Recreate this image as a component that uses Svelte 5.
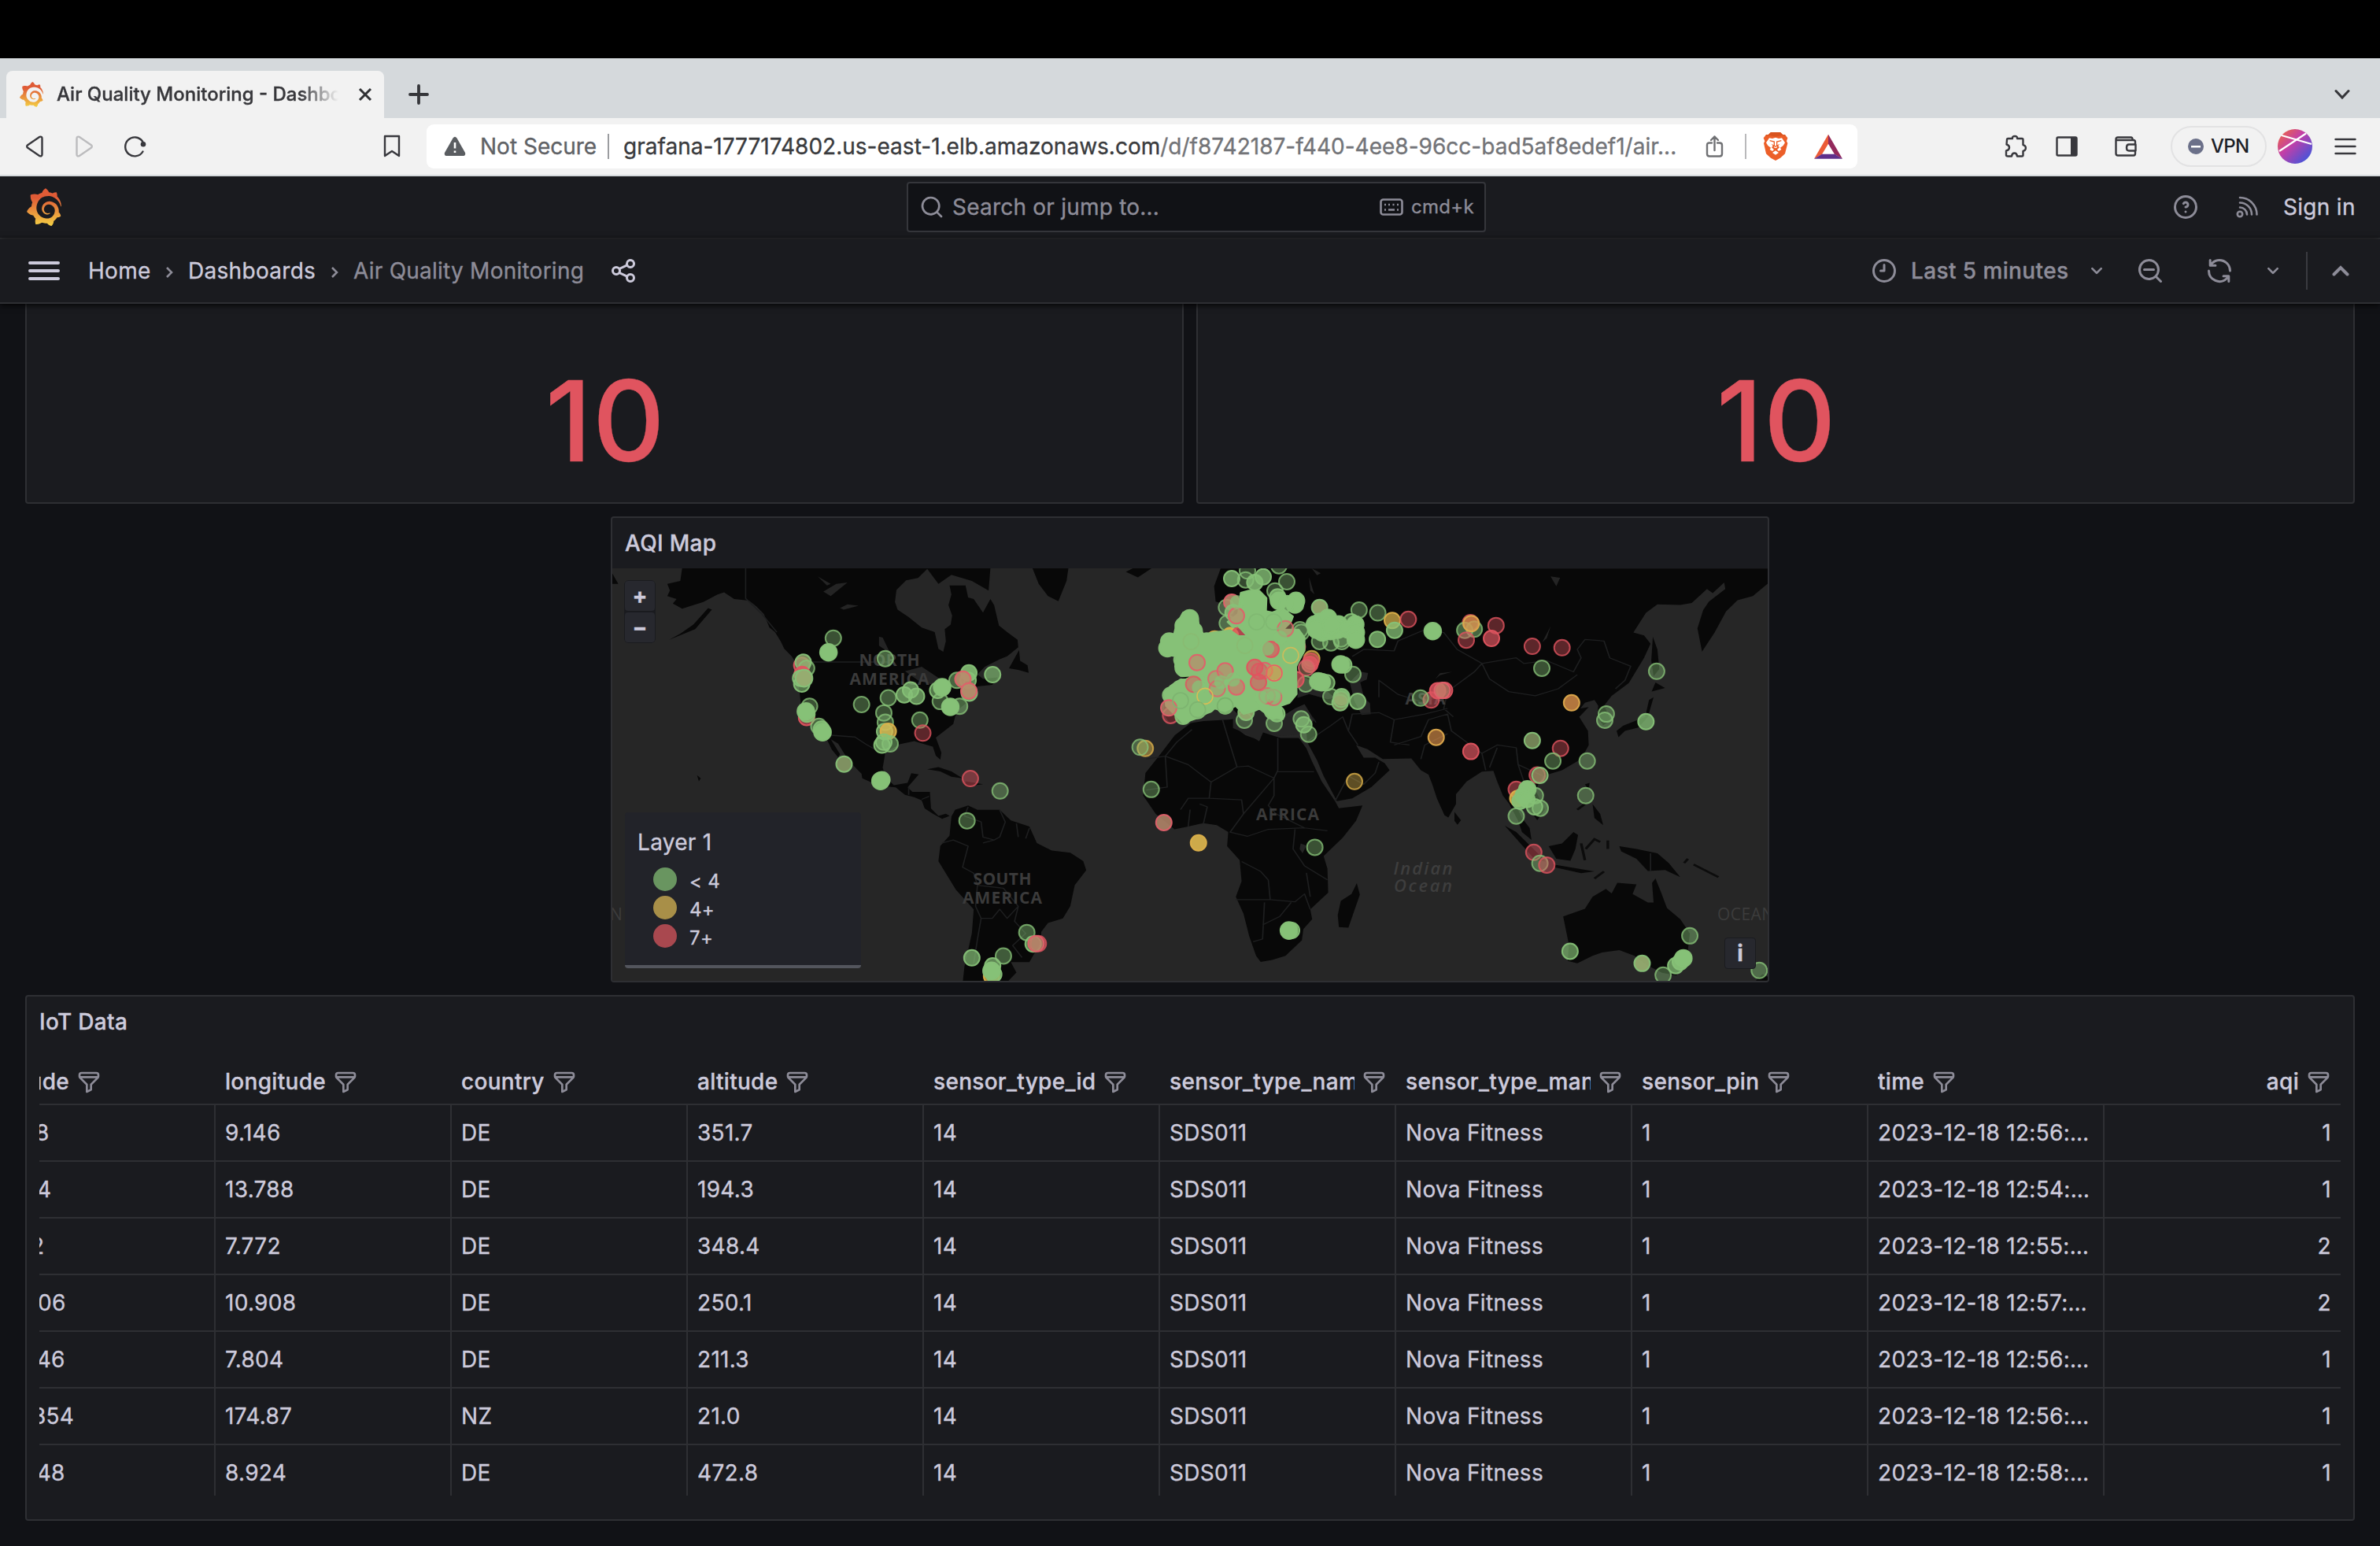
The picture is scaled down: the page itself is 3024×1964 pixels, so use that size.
<script>
  const icons = {
    filter: 'M19,2H5A3,3,0,0,0,2,5V6.17a3,3,0,0,0,.25,1.2l0,.06a2.81,2.81,0,0,0,.59.86L9,14.41V21a1,1,0,0,0,.47.85A1,1,0,0,0,10,22a1,1,0,0,0,.45-.11l4-2A1,1,0,0,0,15,19V14.41l6.12-6.12a2.81,2.81,0,0,0,.59-.86l0-.06A3,3,0,0,0,22,6.17V5A3,3,0,0,0,19,2ZM13.29,13.29A1,1,0,0,0,13,14v4.38l-2,1V14a1,1,0,0,0-.29-.71L5.41,8H18.59ZM20,6H4V5A1,1,0,0,1,5,4H19a1,1,0,0,1,1,1Z',
    share: 'M18,14a4,4,0,0,0-3.08,1.48l-5.1-2.35a3.64,3.64,0,0,0,0-2.26l5.1-2.35A4,4,0,1,0,14,6a4.17,4.17,0,0,0,.07.71L8.79,9.14a4,4,0,1,0,0,5.72l5.28,2.43A4.17,4.17,0,0,0,14,18a4,4,0,1,0,4-4ZM18,4a2,2,0,1,1-2,2A2,2,0,0,1,18,4ZM6,14a2,2,0,1,1,2-2A2,2,0,0,1,6,14Zm12,6a2,2,0,1,1,2-2A2,2,0,0,1,18,20Z',
    clock: 'M12,2A10,10,0,1,0,22,12,10,10,0,0,0,12,2Zm0,18a8,8,0,1,1,8-8A8,8,0,0,1,12,20ZM12,6a1,1,0,0,0-1,1v4H9a1,1,0,0,0,0,2h3a1,1,0,0,0,1-1V7A1,1,0,0,0,12,6Z',
    down: 'M17,9.17a1,1,0,0,0-1.41,0L12,12.71,8.46,9.17a1,1,0,0,0-1.41,0,1,1,0,0,0,0,1.42l4.24,4.24a1,1,0,0,0,1.42,0L17,10.59A1,1,0,0,0,17,9.17Z',
    zoomOut: 'M21.71,20.29,18,16.61A9,9,0,1,0,16.61,18l3.68,3.68a1,1,0,0,0,1.42,0A1,1,0,0,0,21.71,20.29ZM11,18a7,7,0,1,1,7-7A7,7,0,0,1,11,18Zm4-8H7a1,1,0,0,0,0,2h8a1,1,0,0,0,0-2Z',
    search: 'M21.71,20.29,18,16.61A9,9,0,1,0,16.61,18l3.68,3.68a1,1,0,0,0,1.42,0A1,1,0,0,0,21.71,20.29ZM11,18a7,7,0,1,1,7-7A7,7,0,0,1,11,18Z',
    sync: 'M19.91,15.51H15.38a1,1,0,0,0,0,2h2.4A8,8,0,0,1,4,12a1,1,0,0,0-2,0,10,10,0,0,0,16.88,7.23V21a1,1,0,0,0,2,0V16.5A1,1,0,0,0,19.91,15.51ZM12,2A10,10,0,0,0,5.12,4.77V3a1,1,0,0,0-2,0V7.5a1,1,0,0,0,1,1h4.5a1,1,0,0,0,0-2H6.22A8,8,0,0,1,20,12a1,1,0,0,0,2,0A10,10,0,0,0,12,2Z',
    help: 'M11.29,15.29a1.58,1.58,0,0,0-.12.15.76.76,0,0,0-.09.18.64.64,0,0,0-.06.18,1.36,1.36,0,0,0,0,.2.84.84,0,0,0,.08.38.9.9,0,0,0,.54.54.94.94,0,0,0,.76,0,.9.9,0,0,0,.54-.54A1,1,0,0,0,13,16a1,1,0,0,0-.29-.71A1,1,0,0,0,11.29,15.29ZM12,2A10,10,0,1,0,22,12,10,10,0,0,0,12,2Zm0,18a8,8,0,1,1,8-8A8,8,0,0,1,12,20ZM12,7A3,3,0,0,0,9.4,8.5a1,1,0,1,0,1.73,1A1,1,0,0,1,12,9a1,1,0,0,1,0,2,1,1,0,1,0,0,2,3,3,0,0,0,0-6Z',
  };

  const grafana =
    'M342,161.2c-0.6-6.1-1.6-13.1-3.6-20.9c-2-7.7-5-16.2-9.4-25c-4.4-8.8-10.1-17.9-17.5-26.8c-2.9-3.5-6.1-6.9-9.5-10.2c5.1-20.3-6.2-37.9-6.2-37.9c-19.5-1.2-31.9,6.1-36.5,9.4c-0.8-0.3-1.5-0.7-2.3-1c-3.3-1.3-6.7-2.6-10.3-3.7c-3.5-1.1-7.1-2.1-10.8-3c-3.7-0.9-7.4-1.6-11.2-2.2c-0.7-0.1-1.3-0.2-2-0.3c-8.5-27.2-32.9-38.6-32.9-38.6c-27.3,17.3-32.4,41.5-32.4,41.5s-0.1,0.5-0.3,1.4c-1.5,0.4-3,0.9-4.5,1.3c-2.1,0.6-4.2,1.4-6.2,2.2c-2.1,0.8-4.1,1.6-6.2,2.5c-4.1,1.8-8.2,3.8-12.2,6c-3.9,2.2-7.7,4.6-11.4,7.1c-0.5-0.2-1-0.4-1-0.4c-37.8-14.4-71.3,2.9-71.3,2.9c-3.1,40.2,15.1,65.5,18.7,70.1c-0.9,2.5-1.7,5-2.5,7.5c-2.8,9.1-4.9,18.4-6.2,28.1c-0.2,1.4-0.4,2.8-0.5,4.2C18.8,192.7,8.5,228,8.5,228c29.1,33.5,63.1,35.6,63.1,35.6c0,0,0.1-0.1,0.1-0.1c4.3,7.7,9.3,15,14.9,21.9c2.4,2.9,4.8,5.6,7.4,8.3c-10.6,30.4,1.5,55.6,1.5,55.6c32.4,1.2,53.7-14.2,58.2-17.7c3.2,1.1,6.5,2.1,9.8,2.9c10,2.6,20.2,4.1,30.4,4.5c2.5,0.1,5.1,0.2,7.6,0.1l1.2,0l0.8,0l1.6,0l1.6-0.1l0,0.1c15.3,21.8,42.1,24.9,42.1,24.9c19.1-20.1,20.2-40.1,20.2-44.4l0,0c0,0,0-0.1,0-0.3c0-0.4,0-0.6,0-0.6l0,0c0-0.3,0-0.6,0-0.9c4-2.8,7.8-5.8,11.4-9.1c7.6-6.9,14.3-14.8,19.9-23.3c0.5-0.8,1-1.6,1.5-2.4c21.6,1.2,36.9-13.4,36.9-13.4c-3.6-22.5-16.4-33.5-19.1-35.6l0,0c0,0-0.1-0.1-0.3-0.2c-0.2-0.1-0.2-0.2-0.2-0.2c0,0,0,0,0,0c-0.1-0.1-0.3-0.2-0.5-0.3c0.1-1.4,0.2-2.7,0.3-4.1c0.2-2.4,0.2-4.9,0.2-7.3l0-1.8l0-0.9l0-0.5c0-0.6,0-0.4,0-0.6l-0.1-1.5l-0.1-2c0-0.7-0.1-1.3-0.2-1.9c-0.1-0.6-0.1-1.3-0.2-1.9l-0.2-1.9l-0.3-1.9c-0.4-2.5-0.8-4.9-1.4-7.4c-2.3-9.7-6.1-18.9-11-27.2c-5-8.3-11.2-15.6-18.3-21.8c-7-6.2-14.9-11.2-23.1-14.9c-8.3-3.7-16.9-6.1-25.5-7.2c-4.3-0.6-8.6-0.8-12.9-0.7l-1.6,0l-0.4,0c-0.1,0-0.6,0-0.5,0l-0.7,0l-1.6,0.1c-0.6,0-1.2,0.1-1.7,0.1c-2.2,0.2-4.4,0.5-6.5,0.9c-8.6,1.6-16.7,4.7-23.8,9c-7.1,4.3-13.3,9.6-18.3,15.6c-5,6-8.9,12.7-11.6,19.6c-2.7,6.9-4.2,14.1-4.6,21c-0.1,1.7-0.1,3.5-0.1,5.2c0,0.4,0,0.9,0,1.3l0.1,1.4c0.1,0.8,0.1,1.7,0.2,2.5c0.3,3.5,1,6.9,1.9,10.1c1.9,6.5,4.9,12.4,8.6,17.4c3.7,5,8.2,9.1,12.9,12.4c4.7,3.2,9.8,5.5,14.8,7c5,1.5,10,2.1,14.7,2.1c0.6,0,1.2,0,1.7,0c0.3,0,0.6,0,0.9,0c0.3,0,0.6,0,0.9-0.1c0.5,0,1-0.1,1.5-0.1c0.1,0,0.3,0,0.4-0.1l0.5-0.1c0.3,0,0.6-0.1,0.9-0.1c0.6-0.1,1.1-0.2,1.7-0.3c0.6-0.1,1.1-0.2,1.6-0.4c1.1-0.2,2.1-0.6,3.1-0.9c2-0.7,4-1.5,5.7-2.4c1.8-0.9,3.4-2,5-3c0.4-0.3,0.9-0.6,1.3-1c1.6-1.3,1.9-3.7,0.6-5.3c-1.1-1.4-3.1-1.8-4.7-0.9c-0.4,0.2-0.8,0.4-1.2,0.6c-1.4,0.7-2.8,1.3-4.3,1.8c-1.5,0.5-3.1,0.9-4.7,1.2c-0.8,0.1-1.6,0.2-2.5,0.3c-0.4,0-0.8,0.1-1.3,0.1c-0.4,0-0.9,0-1.2,0c-0.4,0-0.8,0-1.2,0c-0.5,0-1,0-1.5-0.1c0,0-0.3,0-0.1,0l-0.2,0l-0.3,0c-0.2,0-0.5,0-0.7-0.1c-0.5-0.1-0.9-0.1-1.4-0.2c-3.7-0.5-7.4-1.6-10.9-3.2c-3.6-1.6-7-3.8-10.1-6.6c-3.1-2.8-5.8-6.1-7.9-9.9c-2.1-3.8-3.6-8-4.3-12.4c-0.3-2.2-0.5-4.5-0.4-6.7c0-0.6,0.1-1.2,0.1-1.8c0,0.2,0-0.1,0-0.1l0-0.2l0-0.5c0-0.3,0.1-0.6,0.1-0.9c0.1-1.2,0.3-2.4,0.5-3.6c1.7-9.6,6.5-19,13.9-26.1c1.9-1.8,3.9-3.4,6-4.9c2.1-1.5,4.4-2.8,6.8-3.9c2.4-1.1,4.8-2,7.4-2.7c2.5-0.7,5.1-1.1,7.8-1.4c1.3-0.1,2.6-0.2,4-0.2c0.4,0,0.6,0,0.9,0l1.1,0l0.7,0c0.3,0,0,0,0.1,0l0.3,0l1.1,0.1c2.9,0.2,5.7,0.6,8.5,1.3c5.6,1.2,11.1,3.3,16.2,6.1c10.2,5.7,18.9,14.5,24.2,25.1c2.7,5.3,4.6,11,5.5,16.9c0.2,1.5,0.4,3,0.5,4.5l0.1,1.1l0.1,1.1c0,0.4,0,0.8,0,1.1c0,0.4,0,0.8,0,1.1l0,1l0,1.1c0,0.7-0.1,1.9-0.1,2.6c-0.1,1.6-0.3,3.3-0.5,4.9c-0.2,1.6-0.5,3.2-0.8,4.8c-0.3,1.6-0.7,3.2-1.1,4.7c-0.8,3.1-1.8,6.2-3,9.3c-2.4,6-5.6,11.8-9.4,17.1c-7.7,10.6-18.2,19.2-30.2,24.7c-6,2.7-12.3,4.7-18.8,5.7c-3.2,0.6-6.5,0.9-9.8,1l-0.6,0l-0.5,0l-1.1,0l-1.6,0l-0.8,0c0.4,0-0.1,0-0.1,0l-0.3,0c-1.8,0-3.5-0.1-5.3-0.3c-7-0.5-13.9-1.8-20.7-3.7c-6.7-1.9-13.2-4.6-19.4-7.8c-12.3-6.6-23.4-15.6-32-26.5c-4.3-5.4-8.1-11.3-11.2-17.4c-3.1-6.1-5.6-12.6-7.4-19.1c-1.8-6.6-2.9-13.3-3.4-20.1l-0.1-1.3l0-0.3l0-0.3l0-0.6l0-1.1l0-0.3l0-0.4l0-0.8l0-1.6l0-0.3c0,0,0,0.1,0-0.1l0-0.6c0-0.8,0-1.7,0-2.5c0.1-3.3,0.4-6.8,0.8-10.2c0.4-3.4,1-6.9,1.7-10.3c0.7-3.4,1.5-6.8,2.5-10.2c1.9-6.7,4.3-13.2,7.1-19.3c5.7-12.2,13.1-23.1,22-31.8c2.2-2.2,4.5-4.2,6.9-6.2c2.4-1.9,4.9-3.7,7.5-5.4c2.5-1.7,5.2-3.2,7.9-4.6c1.3-0.7,2.7-1.4,4.1-2c0.7-0.3,1.4-0.6,2.1-0.9c0.7-0.3,1.4-0.6,2.1-0.9c2.8-1.2,5.7-2.2,8.7-3.1c0.7-0.2,1.5-0.4,2.2-0.7c0.7-0.2,1.5-0.4,2.2-0.6c1.5-0.4,3-0.8,4.5-1.1c0.7-0.2,1.5-0.3,2.3-0.5c0.8-0.2,1.5-0.3,2.3-0.5c0.8-0.1,1.5-0.3,2.3-0.4l1.1-0.2l1.2-0.2c0.8-0.1,1.5-0.2,2.3-0.3c0.9-0.1,1.7-0.2,2.6-0.3c0.7-0.1,1.9-0.2,2.6-0.3c0.5-0.1,1.1-0.1,1.6-0.2l1.1-0.1l0.5-0.1l0.6,0c0.9-0.1,1.7-0.1,2.6-0.2l1.3-0.1c0,0,0.5,0,0.1,0l0.3,0l0.6,0c0.7,0,1.5-0.1,2.2-0.1c2.9-0.1,5.9-0.1,8.8,0c5.8,0.2,11.5,0.9,17,1.9c11.1,2.1,21.5,5.6,31,10.3c9.5,4.6,17.9,10.3,25.3,16.5c0.5,0.4,0.9,0.8,1.4,1.2c0.4,0.4,0.9,0.8,1.3,1.2c0.9,0.8,1.7,1.6,2.6,2.4c0.9,0.8,1.7,1.6,2.5,2.4c0.8,0.8,1.6,1.6,2.4,2.5c3.1,3.3,6,6.6,8.6,10c5.2,6.7,9.4,13.5,12.7,19.9c0.2,0.4,0.4,0.8,0.6,1.2c0.2,0.4,0.4,0.8,0.6,1.2c0.4,0.8,0.8,1.6,1.1,2.4c0.4,0.8,0.7,1.5,1.1,2.3c0.3,0.8,0.7,1.5,1,2.3c1.2,3,2.4,5.9,3.3,8.6c1.5,4.4,2.6,8.3,3.5,11.7c0.3,1.4,1.6,2.3,3,2.1c1.5-0.1,2.6-1.3,2.6-2.8C342.6,170.4,342.5,166.1,342,161.2z';

  const columns = [
    'latitude', 'longitude', 'country', 'altitude', 'sensor_type_id',
    'sensor_type_name', 'sensor_type_manufacturer', 'sensor_pin', 'time', 'aqi',
  ];
  const rows = [
    ['48.78', '9.146', 'DE', '351.7', '12:56:03', '1'],
    ['49.04', '13.788', 'DE', '194.3', '12:54:44', '1'],
    ['48.12', '7.772', 'DE', '348.4', '12:55:20', '2'],
    ['49.406', '10.908', 'DE', '250.1', '12:57:46', '2'],
    ['48.246', '7.804', 'DE', '211.3', '12:56:35', '1'],
    ['-36.854', '174.87', 'NZ', '21.0', '12:56:48', '1'],
    ['48.548', '8.924', 'DE', '472.8', '12:58:09', '1'],
  ].map(([lat, lon, country, alt, time, aqi]) => [
    lat, lon, country, alt, '14', 'SDS011', 'Nova Fitness', '1', `2023-12-18 ${time}`, aqi,
  ]);

  // Marker tones: fill, stroke. "m" and "k" are stacked mixes of red and green.
  const tones = {
    g: ['#86c177', '#86c177'],
    r: ['#dd5560', '#e0545f'],
    y: ['#e0b94f', '#dcb04a'],
    o: ['#dd924c', '#dda94c'],
    m: ['#b98a6c', '#e0606a'],
    k: ['#96ac70', '#86c177'],
  };

  // Markers are stored per region on a local grid: [x, y, tone, density].
  const regions = [
    {
      ox: 770, oy: 650, sx: 0.4719, sy: 0.3827,
      pts: [
        [612, 420, 'g', 0.4], [599, 467, 'g', 1], [752, 488, 'g', 0.5], [527, 510, 'r', 0.6],
        [531, 500, 'k', 0.8], [540, 520, 'g', 0.4], [528, 540, 'r', 0.9], [527, 572, 'g', 0.6],
        [524, 553, 'g', 0.6], [533, 553, 'k', 1], [1041, 541, 'g', 0.65], [945, 560, 'g', 0.5],
        [977, 535, 'g', 0.9], [975, 560, 'g', 0.7], [961, 556, 'm', 0.9], [978, 602, 'g', 0.8],
        [977, 595, 'm', 0.9], [893, 593, 'g', 0.6], [905, 583, 'g', 1], [900, 630, 'g', 0.4],
        [952, 646, 'g', 0.5], [927, 648, 'g', 1], [803, 608, 'g', 0.7], [836, 613, 'g', 0.7],
        [820, 592, 'g', 0.7], [760, 618, 'g', 0.45], [748, 668, 'g', 0.4], [752, 699, 'g', 0.4],
        [688, 640, 'g', 0.4], [845, 692, 'g', 0.4], [853, 735, 'r', 0.4], [750, 730, 'g', 0.7],
        [760, 729, 'y', 0.75], [743, 775, 'g', 0.6], [765, 771, 'g', 0.5], [748, 765, 'g', 0.6],
        [548, 646, 'g', 0.4], [540, 683, 'r', 0.6], [541, 672, 'g', 0.8], [538, 663, 'g', 1],
        [573, 713, 'g', 0.5], [580, 722, 'g', 0.8], [583, 732, 'g', 1], [641, 838, 'k', 0.8],
        [739, 894, 'g', 1], [743, 890, 'g', 0.6], [981, 886, 'r', 0.45], [1061, 927, 'g', 0.4],
        [972, 1026, 'g', 0.4], [1452, 786, 'y', 0.5], [1438, 782, 'g', 0.4], [1468, 922, 'g', 0.4],
        [1502, 1032, 'm', 0.85], [1133, 1397, 'g', 0.45], [1150, 1435, 'g', 0.7], [1164, 1434, 'r', 0.5],
        [1158, 1434, 'm', 0.7], [985, 1481, 'g', 0.7], [1070, 1475, 'g', 0.45], [1041, 1508, 'g', 0.7],
        [1038, 1542, 'y', 0.8], [1044, 1536, 'g', 0.8], [1038, 1524, 'g', 1],
      ],
    },
    {
      ox: 1500, oy: 700, sx: 0.4847, sy: 0.3571,
      pts: [
        [468, 210, 'g', 0.4], [517, 220, 'g', 0.4], [555, 247, 'y', 0.7], [597, 243, 'r', 0.4],
        [561, 282, 'g', 0.75], [516, 314, 'g', 0.75], [661, 285, 'g', 1], [760, 255, 'r', 0.5],
        [745, 282, 'g', 0.5], [770, 278, 'g', 0.5], [762, 258, 'o', 0.7], [749, 317, 'r', 0.45],
        [827, 265, 'r', 0.4], [815, 311, 'r', 0.7], [922, 339, 'r', 0.4], [1000, 344, 'r', 0.4],
        [947, 417, 'g', 0.4], [1248, 428, 'g', 0.4], [1025, 540, 'o', 0.8], [657, 530, 'r', 0.5],
        [629, 523, 'g', 0.4], [692, 496, 'r', 0.6], [674, 497, 'r', 0.85], [686, 496, 'm', 0.6],
        [670, 663, 'o', 0.65], [761, 713, 'r', 0.7], [1116, 580, 'g', 0.4], [1112, 602, 'g', 0.45],
        [1220, 607, 'g', 0.75], [922, 674, 'k', 0.75], [996, 702, 'r', 0.4], [976, 747, 'g', 0.4],
        [1066, 747, 'g', 0.4], [935, 797, 'r', 0.5], [942, 798, 'k', 0.6], [1062, 870, 'g', 0.4],
        [880, 848, 'r', 0.5], [884, 880, 'y', 0.8], [909, 848, 'g', 1], [930, 870, 'g', 0.4],
        [900, 870, 'g', 1], [890, 890, 'g', 0.9], [908, 884, 'g', 0.9], [928, 910, 'g', 0.6],
        [943, 915, 'g', 0.5], [880, 943, 'g', 0.45], [456, 820, 'y', 0.4], [47, 1038, 'y', 0.9],
        [352, 1054, 'g', 0.4], [926, 1072, 'r', 0.45], [942, 1111, 'g', 0.45], [960, 1117, 'r', 0.45],
        [291, 1350, 'g', 0.6], [284, 1350, 'g', 1], [1021, 1424, 'g', 0.65], [1335, 1369, 'g', 0.45],
        [1210, 1467, 'k', 0.95], [1265, 1509, 'g', 0.4], [1298, 1475, 'g', 0.75], [1310, 1462, 'g', 0.9],
        [1318, 1449, 'g', 1], [1517, 1492, 'g', 0.45],
      ],
    },
    {
      ox: 1400, oy: 700, sx: 1 / 3, sy: 1 / 3,
      pts: [
        [555, 76, 'g', 0.35], [675, 56, 'g', 0.4], [548, 110, 'g', 0.35], [495, 105, 'g', 0.75],
        [583, 120, 'g', 0.85], [615, 98, 'g', 0.8], [705, 117, 'g', 0.4], [660, 152, 'g', 0.35],
        [670, 175, 'g', 0.8], [675, 190, 'g', 1], [740, 190, 'g', 1], [736, 204, 'g', 1], [705, 200, 'g', 0.8],
        [475, 215, 'g', 0.4], [495, 195, 'm', 0.9], [478, 275, 'g', 0.45], [500, 235, 'g', 0.8],
        [335, 257, 'g', 1], [312, 285, 'g', 1], [350, 305, 'g', 1], [250, 370, 'g', 1], [257, 345, 'g', 1],
        [290, 350, 'g', 1], [355, 330, 'g', 1], [305, 415, 'g', 0.9], [312, 445, 'g', 1], [262, 550, 'g', 0.9],
        [297, 525, 'g', 0.8], [262, 627, 'r', 0.4], [310, 630, 'g', 0.8],
        [365, 608, 'g', 0.9], [400, 585, 'g', 1], [470, 590, 'g', 0.9], [543, 645, 'g', 0.4],
        [550, 615, 'k', 0.9], [657, 657, 'g', 0.45], [667, 620, 'g', 0.8], [650, 610, 'g', 0.9],
        [430, 335, 'y', 0.8], [490, 322, 'y', 0.9], [525, 320, 'r', 0.8], [400, 345, 'g', 1],
        [760, 310, 'g', 0.35], [745, 365, 'r', 0.8], [735, 330, 'g', 0.85], [755, 300, 'g', 0.35],
        [830, 215, 'k', 0.95], [830, 345, 'g', 0.45], [873, 350, 'g', 0.4], [915, 345, 'g', 0.4],
        [812, 280, 'g', 1], [832, 270, 'g', 1], [862, 255, 'g', 1], [840, 310, 'g', 1], [818, 300, 'g', 1],
        [872, 305, 'g', 1], [903, 280, 'g', 1], [900, 300, 'g', 1], [950, 270, 'g', 0.6], [875, 280, 'g', 1],
        [966, 280, 'g', 1], [940, 300, 'g', 1], [968, 310, 'g', 1], [968, 338, 'g', 1], [912, 335, 'g', 0.4],
        [800, 410, 'y', 0.5], [793, 432, 'r', 0.85], [797, 420, 'r', 0.5], [780, 445, 'm', 0.5],
        [777, 507, 'g', 0.4], [957, 470, 'g', 0.4], [910, 432, 'g', 1], [922, 434, 'g', 0.8],
        [857, 502, 'g', 0.6], [825, 497, 'g', 1], [838, 500, 'g', 1], [873, 555, 'g', 0.4],
        [914, 555, 'g', 0.9], [908, 578, 'k', 0.85], [912, 565, 'k', 0.5], [975, 573, 'g', 0.65],
        [760, 640, 'g', 0.45], [788, 698, 'g', 0.45], [770, 662, 'g', 0.7], [740, 490, 'r', 0.7],
      ],
    },
  ];

  // Markers drawn over the solid cluster.
  const overlay = {
    ox: 1400, oy: 700, sx: 1 / 3, sy: 1 / 3,
    pts: [
      [513, 247, 'm', 0.7], [700, 296, 'm', 0.5], [350, 508, 'r', 0.5], [645, 375, 'r', 0.7], [435, 487, 'm', 0.5],
      [363, 425, 'm', 0.7], [470, 457, 'm', 0.7], [620, 455, 'm', 0.6], [583, 443, 'r', 0.65], [600, 458, 'r', 0.4],
      [657, 465, 'o', 0.6], [513, 518, 'm', 0.9], [597, 500, 'r', 0.6], [440, 524, 'm', 0.35],
      [630, 552, 'm', 0.3], [655, 558, 'm', 0.25], [255, 598, 'm', 0.8],
    ],
    cover: [
      [515, 195], [630, 372], [370, 520], [455, 500], [680, 330], [655, 545], [500, 490], [610, 560],
    ],
    rings: [
      [393, 553, '#d8bc55'], [720, 398, '#cbbd5c'], [657, 465, '#e0606a'], [340, 345, '#89bb72'], [545, 360, '#89bb72'],
      [590, 270, '#80b972'], [300, 570, '#7db470'], [655, 270, '#80b972'], [470, 590, '#7ab16c'], [365, 605, '#7db470'],
    ],
  };

  const place = (grid, [x, y]) => ({ cx: grid.ox + x * grid.sx, cy: grid.oy + y * grid.sy });

  const legend = [
    ['#699560', '< 4'],
    ['#a88f48', '4+'],
    ['#a9484f', '7+'],
  ];
</script>

{#snippet glyph(name, size)}
  <svg class="glyph" width={size} height={size} viewBox="0 0 24 24"><path d={icons[name]} /></svg>
{/snippet}

{#snippet logo(width, height)}
  <svg {width} {height} viewBox="8 0 336 364" preserveAspectRatio="none">
    <defs>
      <linearGradient id="flame" x1="0" y1="1" x2="0" y2="0">
        <stop offset="0" stop-color="#f4d044" />
        <stop offset="0.2" stop-color="#eeb040" />
        <stop offset="0.75" stop-color="#df5b36" />
        <stop offset="1" stop-color="#df5b36" />
      </linearGradient>
    </defs>
    <path d={grafana} fill="url(#flame)" />
  </svg>
{/snippet}

{#snippet marker(grid, p)}
  {@const at = place(grid, p)}
  <circle cx={at.cx} cy={at.cy} r={p[3] === 1 ? 10.8 : 10} fill={tones[p[2]][0]} fill-opacity={p[3]} stroke={tones[p[2]][1]} stroke-opacity={p[3] < 0.6 ? 0.8 : 0.95} stroke-width="2" />
{/snippet}

<div class="screen">
  <div class="notch"></div>

  <div class="tabs">
    <div class="tab">
      {@render logo(30, 32)}
      <span class="tab-title">Air Quality Monitoring - Dashboards - Grafana</span>
      <svg class="close" width="18" height="18" viewBox="0 0 18 18"><path d="M2 2 16 16M16 2 2 16" /></svg>
    </div>
    <svg class="new-tab" width="26" height="26" viewBox="0 0 26 26"><path d="M13 2V24M2 13H24" /></svg>
    <svg class="tab-menu" width="20" height="14" viewBox="0 0 20 14"><path d="M2 2.500 10 11 18 2.500" /></svg>
  </div>

  <div class="toolbar">
    <svg class="ink back" width="24" height="30" viewBox="0 0 24 30"><path d="M18.500 2.800 3.200 13.200Q1.200 15 3.200 16.800L18.500 27.200Q21.500 28 21.500 25V5Q21.500 2 18.500 2.800Z" /></svg>
    <svg class="ink forward" width="24" height="30" viewBox="0 0 24 30"><path d="M5.500 2.800 20.800 13.200Q22.800 15 20.800 16.800L5.500 27.200Q2.500 28 2.500 25V5Q2.500 2 5.500 2.800Z" /></svg>
    <svg class="ink reload" width="30" height="30" viewBox="0 0 30 30"><path d="M24.500 21.500A12 12 0 1 1 24 8.500L25.500 11" /><circle cx="25" cy="12.300" r="3.300" class="dot" /></svg>
    <svg class="ink bookmark" width="22" height="30" viewBox="0 0 22 30"><path d="M2 2H20V27L11 21 2 27Z" /></svg>

    <div class="address">
      <svg class="warn" width="28" height="26" viewBox="0 0 28 26"><path d="M11.500 2.500Q14-1 16.500 2.500L27 21Q28 25 24 25H4Q0 25 1 21Z" fill="#5a5d61" /><path d="M14 8V15.500M14 18.500V21" stroke="#fff" stroke-width="2.600" /></svg>
      <span class="insecure">Not Secure</span>
      <i class="rule"></i>
      <span class="url">grafana-1777174802.us-east-1.elb.amazonaws.com<em>/d/f8742187-f440-4ee8-96cc-bad5af8edef1/air...</em></span>
      <svg class="ink share" width="24" height="30" viewBox="0 0 24 30"><path d="M8 10.500H5Q2 10.500 2 13.500V24.500Q2 27.500 5 27.500H18Q21 27.500 21 24.500V13.500Q21 10.500 18 10.500H15M11.500 20V2.500M7 7 11.500 2.500 16 7" /></svg>
      <i class="rule light"></i>
      <svg class="brave" width="32" height="38" viewBox="0 0 96 112">
        <path d="M30 2H66L76 12H84L94 24 90 36 94 44 84 84 66 100 48 110 30 100 12 84 3 44 7 36 2 24 12 12H20Z" fill="#ec5f29" />
        <path d="M30 2H66L76 12H84L88 17 70 14 48 19 26 14 8 17 12 12H20Z" fill="#d9541f" />
        <path d="M24 24 36 26 48 22 60 26 72 24 84 42 77 53 66 61 70 68 60 74 54 68 63 60 58 54 64 47 54 51V60L48 63 42 60V51L32 47 38 54 33 60 42 68 36 74 26 68 30 61 19 53 12 42Z" fill="#fff" />
        <path d="M26 34 43 38V54L48 57 53 54V38L70 34" fill="none" stroke="#ec5f29" stroke-width="4" />
        <path d="M36 80 48 72 60 80 48 88Z" fill="#fff" />
      </svg>
      <svg class="bat" width="36" height="32" viewBox="0 0 108 96">
        <path d="M54 2V38L30 78 0 95Z" fill="#ec5b36" /><path d="M54 2V38L78 78 108 95Z" fill="#93295c" /><path d="M0 95 30 77H78L108 95Z" fill="#5f2f8c" />
      </svg>
    </div>

    <svg class="ink puzzle" width="28" height="30" viewBox="0 0 28 30"><path d="M3 6.500Q3 5 4.500 5H10Q9.500 2 13 2T16 5H22Q23.500 5 23.500 6.500V13Q27 14 27 17T23.500 21V26Q23.500 27.500 22 27.500H16Q15.500 23.500 12.500 23.500T9 27.500H4.500Q2 27.500 2 26V20.500Q6 19.500 6 16.500T2.500 12.500Z" /></svg>
    <svg class="ink side" width="28" height="26" viewBox="0 0 28 26"><rect x="1.500" y="1.500" width="25" height="23" rx="1.500" /><path d="M19 1H26V25H19Z" class="dot" /></svg>
    <svg class="ink wallet" width="28" height="26" viewBox="0 0 28 26"><path d="M26 10V7Q26 5 24 5H2M22.500 5V3.500Q22.500 1.500 20.500 1.500H4Q1.500 1.500 1.500 4V22Q1.500 24.500 4 24.500H24Q26 24.500 26 22V19M26.500 10.500H18Q15 10.500 15 14.500T18 18.500H26.500Z" /></svg>
    <div class="vpn"><i></i>VPN</div>
    <svg class="avatar" width="44" height="44" viewBox="0 0 44 44">
      <defs><linearGradient id="orb" x1="0.1" y1="0.1" x2="0.9" y2="0.9"><stop offset="0" stop-color="#e8604f" /><stop offset="0.4" stop-color="#c23fa8" /><stop offset="1" stop-color="#3f55dc" /></linearGradient></defs>
      <circle cx="22" cy="22" r="22" fill="url(#orb)" /><path d="M5 8 43 19M36 5.500 2 28" stroke="#fff" stroke-width="2.200" />
    </svg>
    <svg class="ink burger" width="28" height="22" viewBox="0 0 28 22"><path d="M1.500 2H26.500M1.500 11H26.500M1.500 20H26.500" /></svg>
  </div>

  <header class="topbar">
    {@render logo(44, 48)}
    <div class="search">
      {@render glyph('search', 32)}
      <span class="prompt">Search or jump to...</span>
      <svg class="keys" width="30" height="22" viewBox="0 0 30 22"><rect x="1.500" y="1.500" width="27" height="19" rx="3" /><path d="M6 8H8M11 8H13M16.500 8H18.500M22 8H24M6 14.500H8M11 14.500H19M22 14.500H24" /></svg>
      <span class="combo">cmd+k</span>
    </div>
    <div class="account">
      {@render glyph('help', 36)}
      <svg class="rss" width="28" height="28" viewBox="0 0 28 28"><circle cx="5" cy="23" r="3.200" /><path d="M5 2A21.500 21.500 0 0 1 26.500 23.500M5 8.500A15 15 0 0 1 20 23.500M5 14.500A9 9 0 0 1 14 23.500" /></svg>
      <span>Sign in</span>
    </div>
  </header>

  <nav class="crumbs">
    <svg class="menu" width="40" height="24" viewBox="0 0 40 24"><path d="M2 2H38M2 12H38M2 22H38" /></svg>
    <span class="home">Home</span>
    <svg class="sep" width="10" height="16" viewBox="0 0 10 16"><path d="M2 2 8 8 2 14" /></svg>
    <span class="dash">Dashboards</span>
    <svg class="sep" width="10" height="16" viewBox="0 0 10 16"><path d="M2 2 8 8 2 14" /></svg>
    <span class="current">Air Quality Monitoring</span>
    <span class="bright">{@render glyph('share', 36)}</span>
    <div class="controls">
      {@render glyph('clock', 36)}
      <span class="range">Last 5 minutes</span>
      <span class="c1">{@render glyph('down', 32)}</span>
      <span class="c2">{@render glyph('zoomOut', 36)}</span>
      <span class="c3">{@render glyph('sync', 36)}</span>
      <span class="c4">{@render glyph('down', 32)}</span>
      <i></i>
      <svg class="up" width="22" height="14" viewBox="0 0 22 14"><path d="M2.500 11.500 11 3 19.500 11.500" /></svg>
    </div>
  </nav>

  <main>
    <div class="stats">
      <section class="panel stat">10</section>
      <section class="panel stat">10</section>
    </div>

    <section class="panel map">
      <h2>AQI Map</h2>
      <div class="canvas">
        <svg width="1468" height="524" viewBox="778 722 1468 524">
          <rect x="778" y="722" width="1468" height="524" fill="#262626" />
          <g class="land" transform="translate(770 650) scale(.4719 .3827)">
            <path d="M205 187 200 230 165 240 172 262 165 280 190 290 180 305 205 322 230 312 262 300 300 275 318 268 345 290 385 295 405 315 425 340 440 385 455 400 470 430 480 455 500 480 510 500 517 560 525 640 535 670 550 700 565 725 590 745 608 790 625 815 630 805 605 755 625 770 640 800 660 835 688 870 690 885 735 910 780 915 805 940 830 948 850 958 858 985 880 1003 905 1020 925 1010 915 1003 895 1010 875 985 872 930 825 930 812 915 842 872 822 868 812 900 775 908 752 880 745 850 752 800 790 772 830 762 865 775 880 780 888 810 900 823 903 800 888 750 935 705 940 680 950 655 985 620 1000 580 1040 575 1055 550 1015 555 1000 540 1020 515 1060 490 1080 480 1110 450 1108 425 1080 400 1058 378 1045 310 1035 290 1015 335 990 290 975 285 968 245 925 245 930 275 922 310 932 345 928 375 912 390 915 430 908 465 895 455 885 400 850 385 815 350 785 325 778 300 782 260 808 228 840 220 865 190 895 240 930 210 985 230 1030 262 1035 187Z" />
            <path d="M1148 187H1245L1240 230 1218 297 1190 280 1165 240ZM1400 200 1420 187H1470L1460 195 1432 218ZM1085 520 1112 460 1115 495 1135 510 1138 535 1110 525ZM865 855 895 848 930 862 960 885 930 880 900 862ZM968 895 1015 905 970 912ZM17 205 33 240 17 240ZM200 405 235 375 275 320 285 325 240 390 170 425ZM245 875 255 885 250 895Z" />
            <path d="M930 1012 940 990 975 975 1000 990 1060 990 1090 1025 1140 1045 1160 1100 1200 1125 1250 1132 1285 1160 1293 1190 1262 1240 1250 1310 1230 1350 1190 1365 1172 1395 1170 1430 1140 1495 1090 1495 1105 1530 1075 1568H960L965 1510 985 1400 990 1320 942 1255 895 1160 900 1110 925 1075Z" />
          </g>
          <g class="land" transform="translate(1500 700) scale(.4847 .3571)">
            <path d="M27 612-15 655-60 735-92 790-98 870-65 935-16 990 20 980 60 968 95 975 125 1000 122 1050 155 1100 160 1175 145 1230 165 1290 180 1370 198 1440 210 1462 240 1455 275 1440 318 1385 322 1345 345 1310 340 1275 387 1215 385 1130 375 1085 425 1020 460 960 477 905 415 915 405 890 370 820 345 750 330 702 310 665 262 665 215 645 205 672 170 655 145 630 155 595 125 600 60 605Z" />
            <path d="M105 62 88 125 92 180 135 195 150 260 95 290 60 340 15 370 30 420-10 470-40 500-45 580-30 610 0 600 50 550 105 520 165 600 200 600 180 530 240 610 300 560 325 545 350 600 330 645 332 680 358 745 375 800 410 890 450 880 500 840 548 780 535 755 510 735 480 735 460 690 490 705 530 740 605 738 630 780 650 795 660 830 672 880 692 940 702 948 722 900 722 865 750 820 790 785 820 782 830 820 845 870 862 900 885 960 895 1000 920 1028 915 985 895 950 878 900 915 920 935 958 955 920 930 850 950 800 1000 780 1050 740 1070 690 1068 640 1045 590 1070 555 1048 560 1060 540 1085 530 1095 550 1092 590 1108 620 1128 600 1110 550 1130 515 1175 470 1215 380 1232 330 1215 300 1187 290 1220 220 1250 190 1310 192 1340 185 1380 135 1395 150 1425 112 1428 135 1385 180 1370 210 1355 275 1367 358 1400 290 1430 215 1460 175 1500 160 1540 115V62Z" />
            <path d="M1143 640 1148 662 1165 640 1200 628 1225 590 1240 520 1228 530 1218 590 1160 622ZM1235 500 1270 487 1245 468ZM1238 305 1250 350 1255 420 1240 445 1234 390ZM1060 830 1072 825 1070 850ZM1080 900 1100 935 1108 975 1085 950ZM965 1050 1000 1040 1030 1000 1042 1010 1035 1060 1022 1102 985 1095ZM850 977 880 1000 925 1060 958 1105 930 1100ZM978 1115 1085 1140 1050 1146 980 1125ZM1150 1050 1195 1060 1250 1075 1280 1110 1310 1160 1270 1135 1225 1138 1195 1095 1155 1068ZM718 928 735 958 726 974 718 960ZM462 1182 470 1222 440 1340 415 1338 412 1295 420 1245 448 1220ZM1508 1528 1525 1505 1540 1515V1528Z" />
            <path d="M1003 1300 1060 1273 1080 1230 1115 1202 1130 1218 1145 1180 1195 1186 1185 1220 1225 1250 1240 1250 1236 1180 1245 1165 1260 1215 1275 1270 1310 1310 1335 1360 1330 1420 1300 1510 1262 1500 1225 1475 1190 1440 1150 1420 1105 1428 1080 1440 1040 1467 1015 1458 1018 1400Z" />
            <path class="isles" d="M1050 1040 1060 1100M1062 1060 1085 1025 1100 1035M1120 1030V1060M1320 1110 1330 1095M1345 1115 1410 1160M1085 1165 1110 1140M1040 920 1060 900" />
          </g>
          <g class="sea" transform="translate(1400 700) scale(.3333)">
            <path d="M945 500 985 460 1015 465 1010 490 985 500 1000 560 1022 580 1025 622 990 625 962 570ZM750 530 770 480 840 520 890 560 860 565 790 545 745 560ZM790 100 810 165 795 150ZM800 66 835 85 820 92ZM500 640 500 675 560 700 600 725 615 690 680 705 750 700 740 640 600 600Z" />
          </g>
          <g class="sea" transform="translate(1500 700) scale(.4847 .3571)">
            <path d="M948 325 970 268 960 310ZM315 1040 330 1048 320 1075 312 1060ZM970 90 995 95 985 125ZM668 455 680 435 712 430 680 442Z" />
          </g>
          <g class="sea" transform="translate(770 650) scale(.4719 .3827)">
            <path d="M585 265 620 240 650 235 605 280ZM630 320 650 308 680 312 640 325ZM735 415 745 418 765 470 735 445ZM570 215 605 240 595 245ZM805 530 850 515 905 560 880 575 840 560Z" />
          </g>
          <g class="lines" transform="translate(770 650) scale(.4719 .3827)">
            <path d="M376 187V288L420 340 460 400M540 499H760M605 742 670 748 700 772 740 800M815 915V940M850 955 870 945M975 980 965 1010 1010 1030 1015 1080 1045 1090M1060 990 1075 1030 1060 1080 1045 1090 1015 1100M1105 1035 1110 1080M1140 1050 1130 1085M905 1100 935 1090 975 1110 960 1180 990 1200 1000 1240 995 1310 1010 1350M1000 1240 1070 1250 1110 1310 1080 1350 1060 1320 1040 1350 1010 1350 1000 1420 990 1500M1110 1310 1100 1360 1130 1400 1095 1440 1120 1480" />
          </g>
          <g class="lines" transform="translate(1500 700) scale(.4847 .3571)">
            <path d="M30 635-10 680-40 730-90 740M-40 730-35 840-90 850M-40 730 20 760 80 822 148 768 130 690 110 600M148 768 178 765 245 808 255 780V665M255 785H350M80 822 75 880 20 880 0 920M75 880 160 885 165 935 245 808 245 870 230 905 250 935 325 985 385 995M165 935 130 1000 175 1015 230 990 325 985M300 990 295 1060 325 1120 385 1170M160 1105 210 1140 230 1170 235 1240 145 1240M235 1240 300 1248 325 1220 340 1275M220 1250 215 1380 190 1390M215 1330 260 1300 290 1250M60 970 70 910 50 900M20 980 25 920M330 1145 340 1230M405 890 440 800 480 830 510 790 520 750M330 680 395 620 425 590 440 640 465 690M355 610 345 590M440 640 450 580 520 575 560 600 550 680 600 690M560 600 640 580 700 560M560 690 630 660 650 600 700 580 710 640 760 690 790 720 830 690 880 700 885 760 950 800M630 740 640 690 700 650M790 720 800 780M830 700 810 770M885 760 900 820 930 840M450 375 480 350 560 355 570 320 640 280 690 290 725 350 790 400 770 430 700 500 640 540 570 510 520 460V520M790 400 880 380 900 400 960 390 1030 430 1050 380 1040 350 1060 315 1110 320 1125 380 1180 410 1165 460 1140 490M790 400 810 455 860 500 930 515 990 490 1040 440M715 590 690 560 700 500M1232 1075V1140" />
          </g>
          <g class="labels">
            <text x="1130" y="845.500" textLength="77">NORTH</text>
            <text x="1130" y="870" textLength="101">AMERICA</text>
            <text x="1273.500" y="1124" textLength="74">SOUTH</text>
            <text x="1273.500" y="1148" textLength="101">AMERICA</text>
            <text x="1636" y="1042" textLength="80">AFRICA</text>
            <text x="1811" y="895" textLength="51">ASIA</text>
            <text x="2228" y="1169" textLength="92" class="thin">OCEANIA</text>
            <text x="783" y="1169" class="thin">N</text>
            <text x="1808" y="1111" textLength="75" class="ocean">Indian</text>
            <text x="1808" y="1133" textLength="74" class="ocean">Ocean</text>
          </g>

          {#each regions as grid}
            {#each grid.pts as p}{@render marker(grid, p)}{/each}
          {/each}
          <path class="mass" transform="translate(1400 700) scale(.3333)" d="M335 230 365 250 370 290 388 320 430 310 490 303 520 325 556 325 520 285 500 290 480 270 520 240 525 200 530 160 560 152 600 152 627 180 625 230 650 235 690 220 728 250 720 270 690 300 720 300 750 300 772 330 772 380 750 420 740 440 742 545 715 578 680 590 690 640 640 630 600 600 580 610 540 620 510 590 470 610 430 600 380 630 310 655 245 590 240 540 262 515 300 490 320 490 365 470 410 480 480 480 410 475 300 475 280 440 285 400 240 395 222 370 235 325 275 320 285 280 310 235Z" />
          {#each overlay.pts as p}{@render marker(overlay, p)}{/each}
          {#each overlay.cover as p}
            {@const at = place(overlay, p)}
            <circle cx={at.cx} cy={at.cy} r="9" fill="#86c177" fill-opacity="0.75" />
          {/each}
          {#each overlay.rings as p}
            {@const at = place(overlay, p)}
            <circle cx={at.cx} cy={at.cy} r="10" fill="none" stroke={p[2]} stroke-width="1.600" />
          {/each}
        </svg>
        <div class="zoom"><button>+</button><button>−</button></div>
        <div class="legend">
          <h3>Layer 1</h3>
          {#each legend as [color, label]}
            <div class="entry"><svg width="30" height="30" viewBox="0 0 30 30"><circle cx="15" cy="15" r="15" fill={color} /></svg>{label}</div>
          {/each}
        </div>
        <button class="info">i</button>
      </div>
    </section>

    <section class="panel data">
      <h2>IoT Data</h2>
      <div class="viewport">
        <div class="row head">
          {#each columns as name}
            <div class="cell"><span>{name}</span>{@render glyph('filter', 32)}</div>
          {/each}
        </div>
        {#each rows as row}
          <div class="row">
            {#each row as value}<div class="cell"><span>{value}</span></div>{/each}
          </div>
        {/each}
      </div>
    </section>
  </main>
</div>

<style>
  :global(body) { margin: 0; background: #111216; }
  .screen { width: 3024px; height: 1964px; overflow: hidden; display: flex; flex-direction: column; background: #111216; color: #cccadb; font: 400 28px/44px Inter, 'Liberation Sans', sans-serif; letter-spacing: 0.3px; white-space: nowrap; -webkit-text-stroke: 0.35px currentColor; }
  svg { display: block; flex: none; }
  .glyph { fill: currentColor; }
  i { display: block; flex: none; }
  .notch { height: 74px; background: #000; flex: none; }

  .tabs { height: 76px; flex: none; background: #d5d9dc; display: flex; align-items: flex-end; padding-left: 8px; }
  .tab { width: 480px; height: 60px; box-sizing: border-box; padding-left: 17px; background: #f2f2f2; border-radius: 8px 8px 0 0; display: flex; align-items: center; }
  .tab-title { width: 360px; margin-left: 17px; overflow: hidden; font-size: 24px; font-weight: 500; color: #37373b; letter-spacing: 0; mask-image: linear-gradient(90deg, #000 310px, transparent 358px); }
  .close { margin-left: 23px; fill: none; stroke: #303134; stroke-width: 3; }
  .new-tab { margin: 0 0 17px 31px; fill: none; stroke: #35363a; stroke-width: 3.800; stroke-linecap: round; }
  .tab-menu { margin: 0 38px 23px auto; fill: none; stroke: #35363a; stroke-width: 3; stroke-linecap: round; }

  .toolbar { height: 72px; flex: none; background: #f2f2f2; border-bottom: 2px solid #d5d9dc; display: flex; align-items: center; }
  .ink { fill: none; stroke: #38383d; stroke-width: 2.400; stroke-linejoin: round; stroke-linecap: round; }
  .dot { fill: #38383d; stroke: none; }
  .back { margin-left: 32px; }
  .forward { margin-left: 39px; stroke: #bcbcbe; }
  .reload { margin-left: 38px; }
  .bookmark { margin-left: 300px; }
  .address { width: 1818px; height: 56px; box-sizing: border-box; margin-left: 33px; padding-left: 22px; border-radius: 9px; background: #fff; display: flex; align-items: center; color: #3a3b3e; letter-spacing: 0; }
  .insecure { width: 162px; margin-left: 18px; color: #606266; }
  .rule { width: 2px; height: 32px; background: #9b9da0; }
  .light { background: #b9b9bb; }
  .url { width: 1375px; margin-left: 18px; letter-spacing: 0.01px; }
  .url em { font-style: normal; color: #737478; }
  .share { stroke: #707174; }
  .share + .rule { margin-left: 26px; }
  .brave { margin-left: 21px; }
  .bat { margin-left: 33px; }
  .puzzle { margin-left: 187px; }
  .side { margin-left: 37px; }
  .wallet { margin-left: 47px; }
  .vpn { width: 122px; height: 52px; box-sizing: border-box; margin-left: 43px; padding-left: 20px; border: 2px solid #e2e2e3; border-radius: 26px; display: flex; align-items: center; gap: 9px; font-size: 24px; font-weight: 500; color: #1c1e26; letter-spacing: -0.7px; -webkit-text-stroke: 0; }
  .vpn i { width: 20px; height: 20px; border-radius: 50%; background: linear-gradient(#fff, #fff) center / 12px 2.500px no-repeat #6b7089; }
  .avatar { margin-left: 14px; }
  .burger { margin-left: 28px; }

  .topbar { height: 78px; flex: none; background: #1a1b1f; border-bottom: 2px solid #2e2f33; display: flex; align-items: center; padding-left: 34px; color: #8d8c98; }
  .search { width: 736px; height: 64px; box-sizing: border-box; margin-left: 1074px; padding-left: 14px; border: 2px solid #35363b; border-radius: 4px; background: #111216; display: flex; align-items: center; }
  .prompt { width: 543px; margin-left: 10px; letter-spacing: 0.22px; }
  .keys { fill: none; stroke: currentColor; stroke-width: 2.600; }
  .combo { margin-left: 10px; font-size: 24px; }
  .account { margin-left: 871px; display: flex; align-items: center; }
  .rss { margin-left: 46px; fill: none; stroke: currentColor; stroke-width: 2.600; stroke-linecap: round; }
  .account span { margin-left: 32px; color: #cccadb; }

  .crumbs { height: 80px; flex: none; background: #1a1b1f; border-bottom: 2px solid #2e2f33; display: flex; align-items: center; padding-left: 36px; color: #8d8c98; position: relative; box-shadow: 0 1px 8px 0 #000; }
  .menu { fill: none; stroke: #cccadb; stroke-width: 4; stroke-linecap: round; }
  .home { width: 98px; margin-left: 36px; color: #cccadb; }
  .dash { width: 181px; margin-left: 19px; color: #cccadb; }
  .current { width: 325px; margin-left: 19px; letter-spacing: 0.24px; }
  .bright { color: #cccadb; }
  .sep { fill: none; stroke: currentColor; stroke-width: 2.600; margin-top: 4px; }
  .controls { display: flex; align-items: center; margin-left: 1566px; }
  .range { width: 220px; margin-left: 16px; font-weight: 500; letter-spacing: 0.4px; }
  .c2 { margin-left: 34px; }
  .c3 { margin-left: 52px; }
  .c4 { margin-left: 34px; }
  .controls i { width: 2px; height: 48px; margin-left: 26px; background: #3a3b40; }
  .up { margin-left: 31px; fill: none; stroke: currentColor; stroke-width: 4; stroke-linecap: round; }

  main { flex: 1; min-height: 0; padding: 0 32px; display: flex; flex-direction: column; align-items: center; gap: 16px; }
  .panel { box-sizing: border-box; background: #1a1b1f; border: 2px solid #2e2f33; border-radius: 4px; overflow: hidden; }
  .stats { width: 100%; display: flex; gap: 16px; }
  .stat { flex: 1; height: 254px; border-top: 0; border-radius: 0 0 4px 4px; padding: 42px 0 0 3px; text-align: center; color: #e0545f; font-size: 142px; font-weight: 500; line-height: 212px; letter-spacing: 1.500px; }
  h2, h3 { margin: 0; font-weight: 500; font-size: 28px; letter-spacing: 0.3px; }
  h2 { height: 64px; line-height: 64px; padding-left: 16px; }

  .map { width: 1472px; height: 592px; }
  .canvas { position: relative; height: 524px; }
  .land { fill: #080808; }
  .isles { fill: none; stroke: #0c0c0c; stroke-width: 7; }
  .sea { fill: #242424; }
  .lines { fill: none; stroke: #1e1f20; stroke-width: 3.500; stroke-linejoin: round; }
  .mass { fill: #86c177; stroke: #86c177; stroke-width: 8; stroke-linejoin: round; }
  .labels { font: 700 21px 'Open Sans', 'Noto Sans', sans-serif; fill: #3b3b3b; text-anchor: middle; letter-spacing: 0; }
  .thin { font-weight: 400; fill: #3c3c3c; }
  .ocean { font-style: italic; font-weight: 600; font-size: 22px; fill: #3e3e3e; }
  button { display: block; padding: 0; border: 0; color: #cccadb; background: #27282e; font: 700 28px/38px Inter, sans-serif; width: 38px; height: 38px; border-radius: 4px; }
  .zoom { position: absolute; left: 15px; top: 15px; padding: 1px; border-radius: 6px; background: #1a1b1f; display: grid; gap: 2px; }
  .info { position: absolute; right: 15px; bottom: 15px; box-sizing: content-box; border: 1px solid #1a1b1f; }
  .legend { position: absolute; left: 16px; bottom: 16px; width: 300px; height: 198px; box-sizing: border-box; padding: 16px 16px 0; background: #222329; border-bottom: 4px solid #53555d; border-radius: 4px; }
  h3 { font-weight: 400; line-height: 44px; margin-bottom: 10px; }
  .entry { height: 36px; padding-left: 20px; display: flex; align-items: center; gap: 16px; font-size: 24px; line-height: 36px; }
  .entry svg { margin-top: -6px; }

  .data { width: 100%; height: 668px; }
  .viewport { margin: 16px 16px 0; height: 554px; overflow: hidden; }
  .row { display: flex; width: 3000px; margin-left: -76px; height: 72px; box-sizing: border-box; border-bottom: 2px solid #2e2f33; }
  .cell { width: 300px; box-sizing: border-box; padding: 0 12px; border-right: 2px solid #2e2f33; display: flex; align-items: center; overflow: hidden; }
  .cell:last-child { justify-content: flex-end; border-right: 0; }
  .cell span { overflow: hidden; text-overflow: ellipsis; }
  .head { height: 58px; }
  .head .cell { border-right: 0; font-weight: 500; }
  .head .cell span { text-overflow: clip; }
  .head .glyph { margin-left: 9px; color: #8d8c98; margin-top: 2px; }
</style>
